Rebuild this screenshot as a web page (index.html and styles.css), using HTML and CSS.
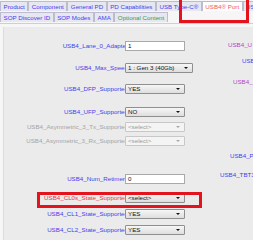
FILE: index.html
```html
<!DOCTYPE html>
<html lang="en">
  <head>
    <meta charset="UTF-8" />
    <title>USB4 Port</title>
    <link rel="stylesheet" href="styles.css">
  </head>
  <body>
    <div class="tabs">
      <div class="tab-row">
        <span class="tab">Product</span>
        <span class="tab">Component</span>
        <span class="tab">General PD</span>
        <span class="tab">PD Capabilities</span>
        <span class="tab">USB Type-C®</span>
        <span class="tab active">USB4® Port</span>
        <span class="tab last">US</span>
      </div>
      <div class="tab-row">
        <span class="tab">SOP Discover ID</span>
        <span class="tab">SOP Modes</span>
        <span class="tab">AMA</span>
        <span class="tab optional">Optional Content</span>
      </div>
      <div class="callout callout-tab"></div>
    </div>

    <div class="page">
      <div class="panel">
        <div class="col-left">
          <div class="field row-lane">
            <label>USB4_Lane_0_Adapter</label>
            <span class="text-box">1</span>
          </div>
          <div class="field row-speed">
            <label>USB4_Max_Speed</label>
            <span class="select wide">1 : Gen 3 (40Gb)</span>
          </div>
          <div class="field row-dfp">
            <label>USB4_DFP_Supported</label>
            <span class="select">YES</span>
          </div>
          <div class="field row-ufp">
            <label>USB4_UFP_Supported</label>
            <span class="select">NO</span>
          </div>
          <div class="field row-tx disabled">
            <label>USB4_Asymmetric_3_Tx_Supported</label>
            <span class="select">&lt;select&gt;</span>
          </div>
          <div class="field row-rx disabled">
            <label>USB4_Asymmetric_3_Rx_Supported</label>
            <span class="select">&lt;select&gt;</span>
          </div>
          <div class="field row-retimers">
            <label>USB4_Num_Retimers</label>
            <span class="text-box">0</span>
          </div>
          <div class="field row-cl0s highlight">
            <label>USB4_CL0s_State_Supported</label>
            <span class="select">&lt;select&gt;</span>
            <div class="callout callout-field"></div>
          </div>
          <div class="field row-cl1">
            <label>USB4_CL1_State_Supported</label>
            <span class="select">YES</span>
          </div>
          <div class="field row-cl2">
            <label>USB4_CL2_State_Supported</label>
            <span class="select">YES</span>
          </div>
        </div>

        <!-- правая колонка уходит за край окна, видно только начало подписей -->
        <div class="col-right">
          <span class="side purple side-usb3">USB4_U</span>
          <span class="side side-dp">USB</span>
          <span class="side purple side-pcie">USB4_</span>
          <span class="side side-pd">USB4_P</span>
          <span class="side side-tbt3">USB4_TBT3</span>
        </div>
      </div>
    </div>
  </body>
</html>
```

FILE: styles.css
```css
:root {
  --label-blue: #3f3fec;
  --label-purple: #b046c8;
  --label-red: #e83838;
  --label-gray: #a4a4a4;
  --callout: #e4141e;
  --tab-bg: #e7e7f1;
  --tab-border: #bcbccc;
  --panel-bg: #ebebeb;
}

body {
  margin: 0;
  width: 253px;
  height: 240px;
  overflow: hidden;
  background: #f6f6f6;
  font-family: "Liberation Sans", Arial, sans-serif;
  font-size: 6.2px;
  color: #222;
}

/* Вкладки */
.tabs {
  position: relative;
  padding-top: 1px;
}

.tab-row {
  display: flex;
  height: 10px;
  margin-bottom: 1px;
  white-space: nowrap;
}

.tab {
  box-sizing: border-box;
  height: 10px;
  line-height: 9px;
  padding: 0 2.5px;
  border: 1px solid var(--tab-border);
  border-bottom: none;
  background: var(--tab-bg);
  color: var(--label-blue);
  font-size: 6.2px;
}

.tab.active {
  background: #fff;
  color: #f25a5a;
}

.tab.optional {
  color: #3e9c3e;
}

.tab.last {
  flex: 1;
}

/* Красные рамки */
.callout {
  position: absolute;
  border: 3px solid var(--callout);
  box-sizing: border-box;
}

.callout-tab {
  left: 179px;
  top: -4px;
  width: 70px;
  height: 27px;
}

.callout-field {
  left: 33px;
  top: -1px;
  width: 165px;
  height: 16px;
}

/* Страница */
.page {
  border-top: 1px solid #cfcfcf;
  padding: 3px 0 0 3px;
}

.panel {
  display: flex;
  height: 220px;
  background: var(--panel-bg);
  border-left: 1px solid #dcdcdc;
}

.col-left {
  display: flex;
  flex-direction: column;
  width: 196px;
  flex: none;
  padding-top: 14px;
}

.field {
  position: relative;
  display: flex;
  align-items: center;
  height: 10px;
  flex: none;
}

.field label {
  width: 124px;
  flex: none;
  text-align: right;
  white-space: nowrap;
  color: var(--label-blue);
  line-height: 10px;
}

.text-box,
.select {
  box-sizing: border-box;
  width: 60px;
  height: 10px;
  line-height: 8px;
  margin-left: -3px;
  padding-left: 2px;
  border: 1px solid #a9a9a9;
  background: #fff;
  color: #111;
  white-space: nowrap;
  flex: none;
}

.select {
  position: relative;
  border-color: #8f8f8f;
  border-radius: 1px;
  background: linear-gradient(#f6f6f6, #dedede);
}

.select::after {
  content: "";
  position: absolute;
  right: 4px;
  top: 3px;
  border-left: 2px solid transparent;
  border-right: 2px solid transparent;
  border-top: 2px solid #111;
}

.select.wide {
  width: 68px;
}

.disabled label {
  color: var(--label-gray);
}

.disabled .select {
  border-color: #c8c8c8;
  background: #f4f4f4;
  color: #9a9a9a;
}

.disabled .select::after {
  border-top-color: #a8a8a8;
}

.highlight label {
  color: var(--label-red);
}

/* Отступы строк */
.row-speed { margin-top: 12px; }
.row-dfp { margin-top: 11px; }
.row-ufp { margin-top: 13px; }
.row-tx { margin-top: 5px; }
.row-rx { margin-top: 4px; }
.row-retimers { margin-top: 28px; }
.row-cl0s { margin-top: 9px; }
.row-cl1 { margin-top: 6px; }
.row-cl2 { margin-top: 6px; }

/* Правая колонка */
.col-right {
  display: flex;
  flex-direction: column;
  align-items: flex-start;
  padding-top: 14px;
}

.side {
  height: 7px;
  line-height: 7px;
  white-space: nowrap;
  color: var(--label-blue);
}

.side.purple {
  color: var(--label-purple);
}

.side-usb3 { margin-left: 28px; }
.side-dp { margin-left: 42px; margin-top: 9px; }
.side-pcie { margin-left: 33px; margin-top: 14px; }
.side-pd { margin-left: 30px; margin-top: 67px; }
.side-tbt3 { margin-left: 20px; margin-top: 12px; }
```
